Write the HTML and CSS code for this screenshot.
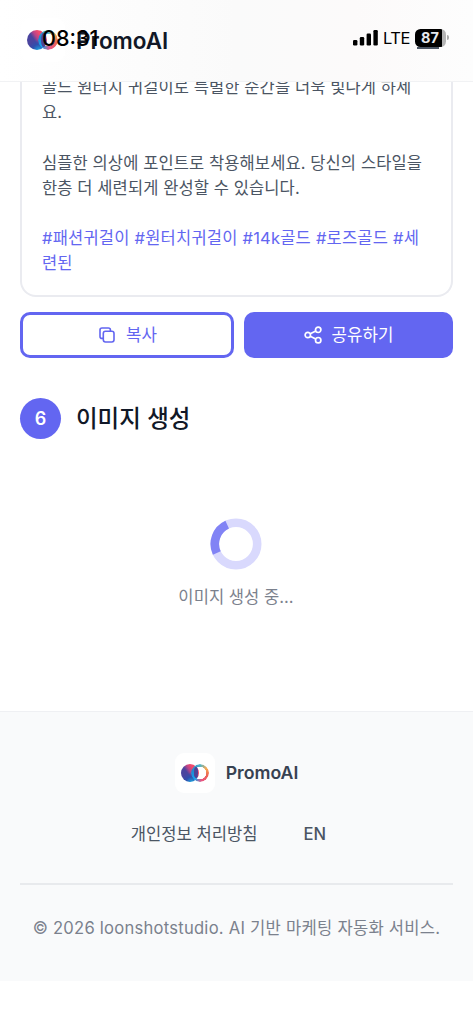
FILE: index.html
```html
<!DOCTYPE html>
<html lang="ko">
<head>
<meta charset="utf-8">
<meta name="viewport" content="width=device-width, initial-scale=1">
<title>PromoAI</title>
<link rel="stylesheet" href="styles.css">
</head>
<body>
<header class="header">
  <div class="logo logo-header"><div class="logo-disc"></div><div class="logo-ring"></div><div class="logo-lens"></div></div>
  <span class="brand">PromoAI</span>
  <div class="status-time">08:31</div>
  <div class="status">
    <svg class="signal" width="26" height="17" viewBox="0 0 26 17"><rect x="0" y="11" width="4.4" height="5.5" rx="1.2"/><rect x="6.8" y="8" width="4.4" height="8.5" rx="1.2"/><rect x="13.6" y="4.5" width="4.4" height="12" rx="1.2"/><rect x="20.4" y="1" width="4.4" height="15.5" rx="1.2"/></svg>
    <span class="network">LTE</span>
    <div class="battery"><span>87</span></div>
    <i class="battery-cap"></i>
    <i class="menu-line"></i>
  </div>
</header>
<main class="main">
  <section class="card">
    <p class="line line-a">골드 원터치 귀걸이로 특별한 순간을 더욱 빛나게 하세</p>
    <p class="line">요.</p>
    <p class="line gap">심플한 의상에 포인트로 착용해보세요. 당신의 스타일을</p>
    <p class="line">한층 더 세련되게 완성할 수 있습니다.</p>
    <p class="line tag gap">#패션귀걸이 #원터치귀걸이 #14k골드 #로즈골드 #세</p>
    <p class="line tag">련된</p>
  </section>
  <div class="actions">
    <button class="btn btn-copy">
      <svg width="16" height="16" viewBox="0 0 16 16" fill="none" stroke="currentColor" stroke-width="1.6" stroke-linejoin="round" stroke-linecap="round"><rect x="4.3" y="4.3" width="10.7" height="10.7" rx="2.2"/><path d="M4.3 11.4H3A2 2 0 0 1 1 9.4V3a2 2 0 0 1 2-2h6.4a2 2 0 0 1 2 2v1.3"/></svg>
      <span>복사</span>
    </button>
    <button class="btn btn-share">
      <svg width="18" height="18" viewBox="0 0 18 18" fill="none" stroke="currentColor" stroke-width="1.7"><circle cx="3.8" cy="9" r="2.7"/><circle cx="14.2" cy="3.8" r="2.7"/><circle cx="14.2" cy="14.2" r="2.7"/><path d="M6.2 7.8l5.6-2.8M6.2 10.2l5.6 2.8"/></svg>
      <span>공유하기</span>
    </button>
  </div>
  <div class="step"><span class="step-num">6</span><h2 class="step-title">이미지 생성</h2></div>
  <div class="loading">
    <svg width="52" height="52" viewBox="0 0 52 52" fill="none" stroke-width="8.6"><circle cx="26" cy="26" r="21.2" stroke="#d9d9fd"/><path d="M6.8 35A21.2 21.2 0 0 1 17.2 6.7" stroke="#8183f5"/></svg>
    <p class="loading-text">이미지 생성 중...</p>
  </div>
</main>
<footer class="footer">
  <div class="footer-brand">
    <div class="logo"><div class="logo-disc"></div><div class="logo-ring"></div><div class="logo-lens"></div></div>
    <span class="footer-name">PromoAI</span>
  </div>
  <nav class="links"><a class="privacy">개인정보 처리방침</a><a class="lang">EN</a></nav>
  <p class="copyright">© 2026 loonshotstudio. AI 기반 마케팅 자동화 서비스.</p>
</footer>
</body>
</html>
```
FILE: styles.css
```css
* { box-sizing: border-box; margin: 0; padding: 0; }
body { width: 473px; height: 1024px; overflow: hidden; background: #fff; font-family: Inter, "Noto Sans CJK KR", sans-serif; }
.header { position: relative; height: 82px; display: flex; align-items: center; gap: 11px; padding: 0 21px 1px; background: linear-gradient(90deg, #fff, #fafafa 50%, #fcfafa 75%, #fdfdfd); border-bottom: 1px solid #f1f2f4; }
.brand { font-size: 22.5px; font-weight: 600; color: #111827; letter-spacing: -.02px; margin-top: 0; }
.status-time { position: absolute; left: 42px; top: 24px; font-size: 21.5px; line-height: 28px; font-weight: 500; color: #000; }
.status { position: absolute; left: 353px; top: 28px; display: flex; align-items: center; height: 19px; color: #000; }
.network { margin-left: 4px; width: 28px; font-size: 16.5px; letter-spacing: -.5px; }
.battery { margin-left: 4px; width: 31px; height: 18px; border-radius: 5.5px; background: linear-gradient(90deg, #000 87%, #b5b5b5 87%); color: #e6e9ee; font-size: 14.5px; line-height: 18px; font-weight: 700; padding-left: 6px; }
.battery-cap { width: 2px; height: 5px; margin-left: 1px; border-radius: 0 2px 2px 0; background: #aaa; }
.menu-line { position: absolute; left: 64px; top: 19px; width: 22px; height: 2px; background: #4b5563; }

.logo { position: relative; width: 40px; height: 40px; flex: none; border-radius: 9px; background: #fff; }
.logo-header { width: 44px; height: 44px; }
.logo-disc, .logo-ring, .logo-lens { position: absolute; top: 10.5px; width: 18px; height: 18px; border-radius: 50%; }
.logo-disc { left: 6px; background: radial-gradient(circle at 60% 105%, #1b9fdc 5%, rgba(45,80,175,.9) 28%, transparent 48%), linear-gradient(55deg, #4a449f 42%, #b8448a 55%, #f04b6e 70%); }
.logo-ring { left: 16px; background: conic-gradient(#52b5c8, #f8aa52 15%, #ec6355 30%, #e95583 47%, #17a5ef 62%, #2086d0 80%, #52b5c8); -webkit-mask: radial-gradient(circle, transparent 6px, #000 6.5px); mask: radial-gradient(circle, transparent 6px, #000 6.5px); }
.logo-lens { left: 19px; top: 14px; width: 4.5px; height: 11px; background: #4e4397; }
.logo-header .logo-disc { left: 6px; top: 12px; width: 20px; height: 20px; }
.logo-header .logo-ring { left: 17px; top: 12px; width: 20px; height: 20px; }
.logo-header .logo-lens { left: 20px; top: 15px; height: 14px; }

.main { height: 629px; padding: 0 20px; }
.card { height: 215px; overflow: hidden; padding: 0 20px; border: 2px solid #eaebf0; border-top: 0; border-radius: 0 0 16px 16px; }
.line { font-size: 16.5px; line-height: 25.15px; color: #4b5563; white-space: nowrap; letter-spacing: .1px; }
.line-a { margin-top: -7px; }
.gap { margin-top: 25.2px; }
.tag { color: #6366f1; }
.tag.gap { letter-spacing: .22px; }
.actions { display: grid; grid-template-columns: 214px 209px; gap: 10px; margin-top: 15px; }
.btn { height: 46px; display: flex; align-items: center; justify-content: center; border-radius: 10px; font: inherit; font-size: 16.8px; padding-bottom: 1px; }
.btn-copy { gap: 11px; padding-left: 2px; color: #6366f1; background: #fff; border: 3px solid #6366f1; }
.btn-share { gap: 10px; color: #fff; background: #6366f1; border: 0; }
.btn span { margin-top: -1px; }
.step { display: flex; align-items: center; gap: 15px; height: 41px; margin-top: 40px; }
.step-num { width: 41px; height: 41px; border-radius: 50%; background: #6366f1; color: #fff; font-size: 18px; font-weight: 600; line-height: 41px; text-align: center; }
.step-title { font-size: 23.5px; font-weight: 500; color: #111827; line-height: 40px; }
.loading { display: flex; flex-direction: column; align-items: center; margin: 79px 1px 0 0; }
.loading-text { margin-top: 15px; font-size: 16.6px; line-height: 25px; color: #7b818d; }

.footer { height: 270px; padding: 41px 20px 0; background: #f9fafb; border-top: 1px solid #eff0f3; }
.footer-brand { display: flex; align-items: center; justify-content: center; gap: 11px; height: 40px; }
.footer-name { font-size: 17.7px; font-weight: 600; color: #374151; margin-top: -2px; }
.links { display: flex; justify-content: center; gap: 46px; margin-top: 28px; padding-right: 16px; font-size: 16.6px; line-height: 26px; color: #4b5563; }
.lang { font-weight: 500; }
.copyright { margin-top: 36px; padding-top: 31px; border-top: 2px solid #e8eaed; text-align: center; white-space: nowrap; font-size: 16.6px; letter-spacing: .24px; line-height: 25px; color: #7b818d; }
```
